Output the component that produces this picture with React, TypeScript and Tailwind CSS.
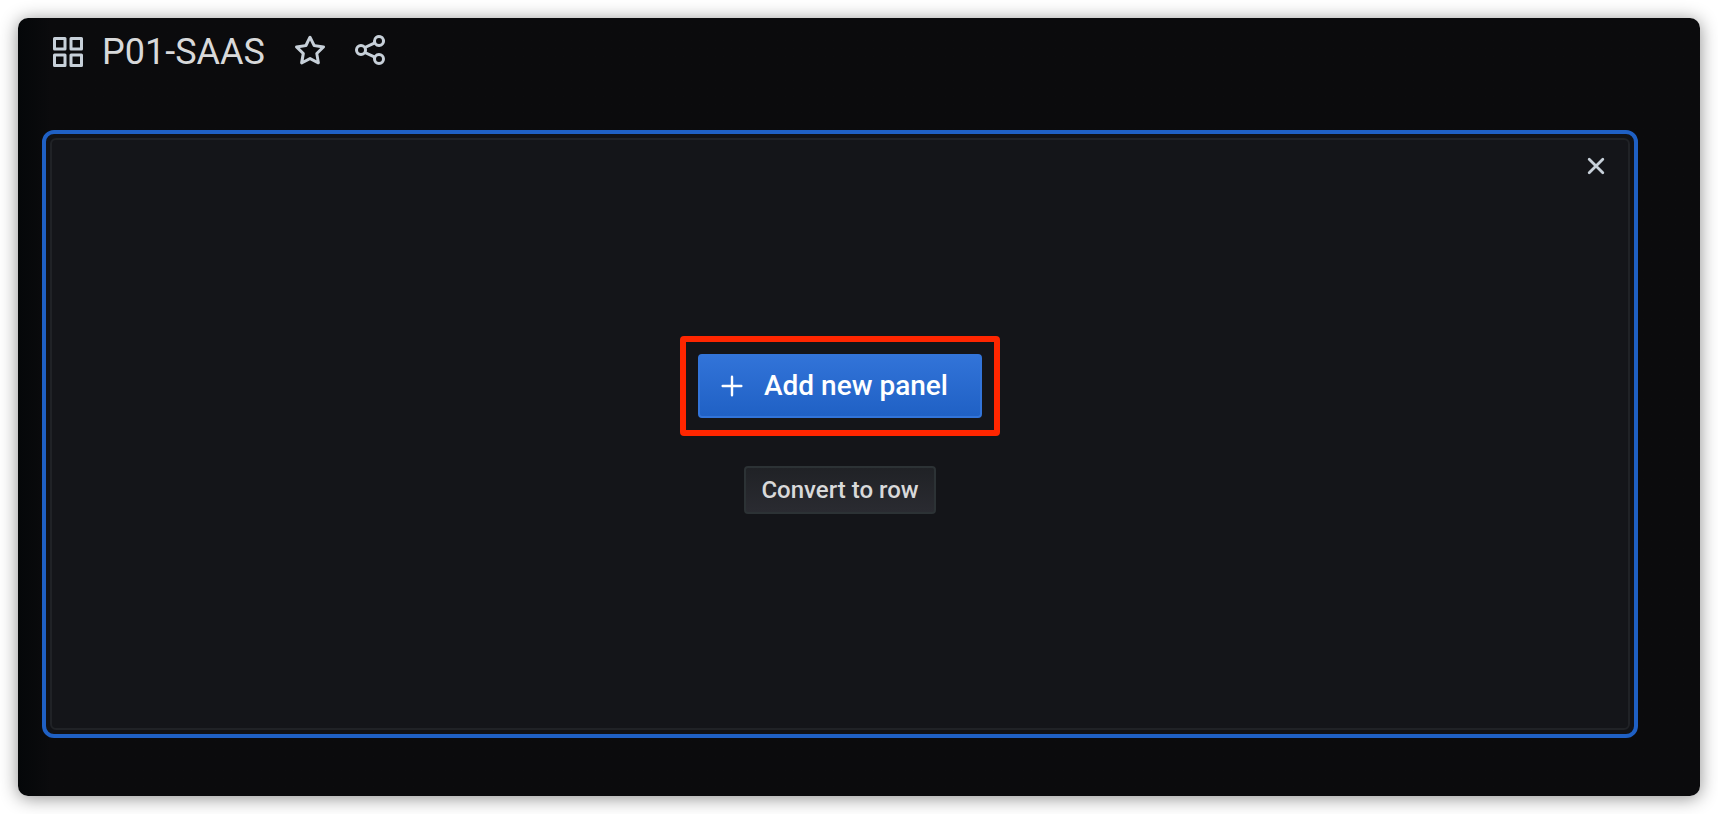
import type { ReactNode } from "react";

type IconProps = { className?: string; children: ReactNode };

function Icon({ className = "size-9", children }: IconProps) {
  return (
    <svg viewBox="0 0 24 24" fill="currentColor" aria-hidden="true" className={className}>
      {children}
    </svg>
  );
}

function AppsIcon() {
  return (
    <Icon>
      <path d="M10,13H3a1,1,0,0,0-1,1v7a1,1,0,0,0,1,1h7a1,1,0,0,0,1-1V14A1,1,0,0,0,10,13ZM9,20H4V15H9ZM21,2H14a1,1,0,0,0-1,1v7a1,1,0,0,0,1,1h7a1,1,0,0,0,1-1V3A1,1,0,0,0,21,2ZM20,9H15V4h5Zm1,4H14a1,1,0,0,0-1,1v7a1,1,0,0,0,1,1h7a1,1,0,0,0,1-1V14A1,1,0,0,0,21,13Zm-1,7H15V15h5ZM10,2H3A1,1,0,0,0,2,3v7a1,1,0,0,0,1,1h7a1,1,0,0,0,1-1V3A1,1,0,0,0,10,2ZM9,9H4V4H9Z" />
    </Icon>
  );
}

function StarIcon() {
  return (
    <Icon>
      <path d="M22,9.67A1,1,0,0,0,21.14,9l-5.69-.83L12.9,3a1,1,0,0,0-1.8,0L8.55,8.16,2.86,9a1,1,0,0,0-.81.68,1,1,0,0,0,.25,1l4.13,4-1,5.68A1,1,0,0,0,6.9,21.44L12,18.77l5.1,2.67a.93.93,0,0,0,.46.12,1,1,0,0,0,.59-.19,1,1,0,0,0,.4-1l-1-5.68,4.13-4A1,1,0,0,0,22,9.67Zm-6.15,4a1,1,0,0,0-.29.88l.72,4.2-3.76-2a1.06,1.06,0,0,0-.94,0l-3.76,2,.72-4.2a1,1,0,0,0-.29-.88l-3-3,4.21-.61a1,1,0,0,0,.76-.55L12,5.7l1.88,3.82a1,1,0,0,0,.76.55l4.21.61Z" />
    </Icon>
  );
}

function ShareIcon() {
  return (
    <Icon>
      <path d="M18,14a4,4,0,0,0-3.08,1.48l-5.1-2.35a3.64,3.64,0,0,0,0-2.26l5.1-2.35A4,4,0,1,0,14,6a4.17,4.17,0,0,0,.07.71L8.79,9.14a4,4,0,1,0,0,5.72l5.28,2.43A4.17,4.17,0,0,0,14,18a4,4,0,1,0,4-4ZM18,4a2,2,0,1,1-2,2A2,2,0,0,1,18,4ZM6,14a2,2,0,1,1,2-2A2,2,0,0,1,6,14Zm12,6a2,2,0,1,1,2-2A2,2,0,0,1,18,20Z" />
    </Icon>
  );
}

function PlusIcon() {
  return (
    <Icon className="size-8">
      <path d="M19,11.1H12.9V5a.9.9,0,0,0-1.8,0v6.1H5a.9.9,0,0,0,0,1.8h6.1V19a.9.9,0,0,0,1.8,0V12.9H19a.9.9,0,0,0,0-1.8Z" />
    </Icon>
  );
}

function CloseIcon() {
  return (
    <Icon className="size-6">
      <path d="M5.2 5.2 18.8 18.8M18.8 5.2 5.2 18.8" fill="none" stroke="currentColor" strokeWidth="2.8" strokeLinecap="round" />
    </Icon>
  );
}

function DashboardHeader() {
  return (
    <header className="flex items-center px-8 pt-3 text-[#c7d0d9]">
      <AppsIcon />
      <h1 className="ml-4 text-4xl leading-11 text-[#d8d9da]">P01-SAAS</h1>
      <div className="ml-[27px] flex gap-6 pb-1">
        <button type="button" aria-label="Mark as favorite">
          <StarIcon />
        </button>
        <button type="button" aria-label="Share dashboard">
          <ShareIcon />
        </button>
      </div>
    </header>
  );
}

function AddPanelWidget() {
  return (
    <section
      aria-label="Add panel"
      className="mr-[62px] mb-[58px] ml-6 flex grow rounded-xl border-4 border-[#1f60c4] bg-[#111216] p-1"
    >
      <div className="flex grow flex-col rounded-md border-2 border-[#202226] bg-[#141519]">
        <div className="flex justify-end px-5 pt-3.5">
          <button type="button" aria-label="Close" className="text-[#c7d0d9]">
            <CloseIcon />
          </button>
        </div>
        <div className="flex grow flex-col items-center justify-center gap-[30px] pb-14">
          <div className="rounded-sm border-6 border-[#ff2600] p-3">
            <button
              type="button"
              className="flex h-16 items-center gap-4 rounded-sm border-2 border-[#3274d9] bg-linear-to-b from-[#3274d9] to-[#1f60c4] bg-origin-border pr-8 pl-4 text-[28px] font-medium text-white"
            >
              <PlusIcon />
              Add new panel
            </button>
          </div>
          <button
            type="button"
            className="h-12 rounded-sm border-2 border-[#2c3235] bg-linear-to-b from-[#202226] to-[#2a2b31] px-[15px] text-2xl font-medium text-[#d8d9da]"
          >
            Convert to row
          </button>
        </div>
      </div>
    </section>
  );
}

export default function App() {
  return (
    <div className="flex min-h-screen bg-white p-[18px] font-['Roboto',sans-serif]">
      <main className="flex grow flex-col gap-14 rounded-[10px] bg-linear-to-r from-[#050709] to-[#0b0b0d] to-[32px] shadow-[0_2px_18px_rgba(0,0,0,0.45)]">
        <DashboardHeader />
        <AddPanelWidget />
      </main>
    </div>
  );
}
